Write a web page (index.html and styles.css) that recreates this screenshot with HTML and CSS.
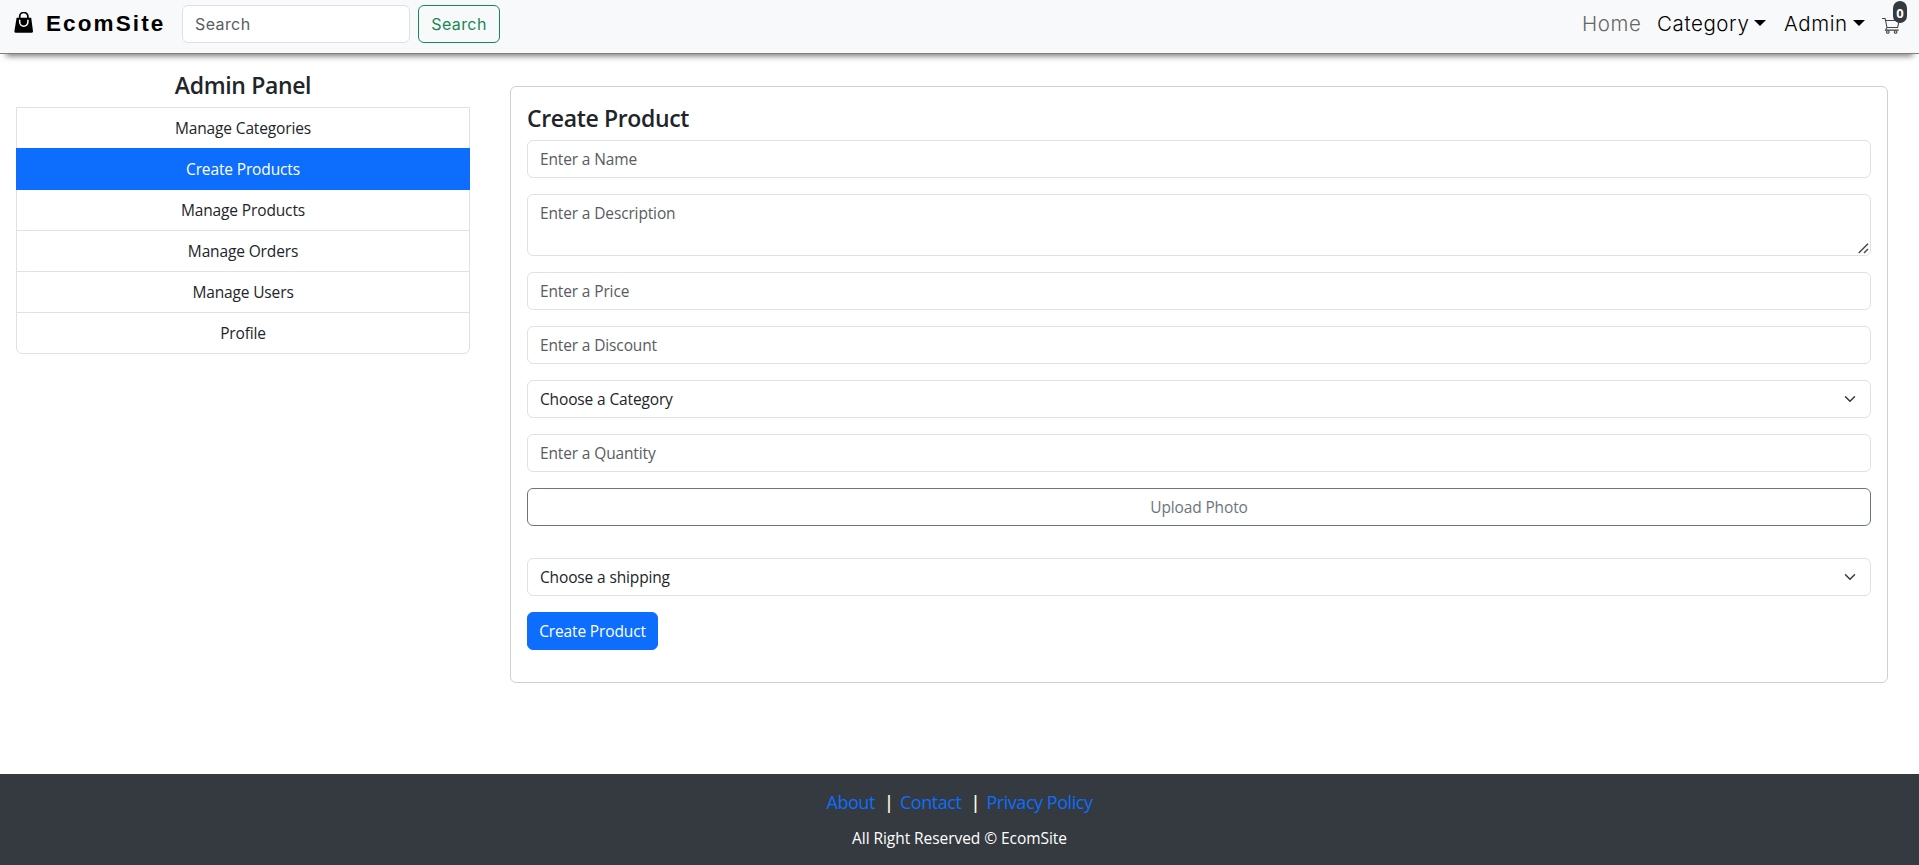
FILE: index.html
```html
<!DOCTYPE html>
<html lang="en">
<head>
<meta charset="utf-8">
<title>Create Product - EcomSite</title>
<link rel="stylesheet" href="styles.css">
</head>
<body>
<header class="navbar">
  <a class="brand">
    <svg class="brand-icon" width="20" height="22" viewBox="0 0 20 22"><path d="M5.7 7V4.6a4.1 4.1 0 0 1 8.2 0V7" fill="none" stroke="#000" stroke-width="1.7"/><path d="M2.6 5.7h14.6L19 19.3a1.3 1.3 0 0 1-1.2 1.5H1.6A1.3 1.3 0 0 1 .4 19.3z" fill="#000"/><path d="M5.7 8.3v1.8a4.1 4.1 0 0 0 8.2 0V8.3" fill="none" stroke="#fff" stroke-width="1.5" stroke-linecap="round"/></svg>
    <span>EcomSite</span>
  </a>
  <form class="search">
    <input class="control search-input" type="search" placeholder="Search">
    <button class="btn btn-search" type="button">Search</button>
  </form>
  <nav class="nav-links">
    <a class="nav-link home">Home</a>
    <a class="nav-link category">Category</a>
    <a class="nav-link admin">Admin</a>
    <a class="cart">
      <svg width="18" height="18" viewBox="0 0 18 18" fill="none" stroke="#444" stroke-width="1.1"><path d="M0 1.5h3.1L5 10.5h10.6L17.2 3.5H3.6M5 10.5l-1.5 2.6h13.2"/><circle cx="5.8" cy="15" r="1.3"/><circle cx="13.6" cy="15" r="1.3"/></svg>
      <span class="badge">0</span>
    </a>
  </nav>
</header>
<main class="page">
  <aside class="sidebar">
    <h4 class="title">Admin Panel</h4>
    <div class="list">
      <a class="item">Manage Categories</a>
      <a class="item active">Create Products</a>
      <a class="item">Manage Products</a>
      <a class="item">Manage Orders</a>
      <a class="item">Manage Users</a>
      <a class="item">Profile</a>
    </div>
  </aside>
  <section class="card">
    <h4 class="title">Create Product</h4>
    <form class="fields">
      <input class="control" placeholder="Enter a Name">
      <div class="area-wrap">
        <textarea class="control area" placeholder="Enter a Description"></textarea>
        <svg class="grip" width="11" height="11" viewBox="0 0 11 11"><path d="M.7 10 10 .7M6 10l4-4" fill="none" stroke="#444" stroke-width="1.4"/></svg>
      </div>
      <input class="control" placeholder="Enter a Price">
      <input class="control" placeholder="Enter a Discount">
      <div class="control select">Choose a Category<svg width="12" height="12" viewBox="0 0 16 16"><path d="m2 5 6 6 6-6" fill="none" stroke="#343a40" stroke-width="2" stroke-linecap="round" stroke-linejoin="round"/></svg></div>
      <input class="control" placeholder="Enter a Quantity">
      <label class="btn btn-upload">Upload Photo</label>
      <div class="control select">Choose a shipping<svg width="12" height="12" viewBox="0 0 16 16"><path d="m2 5 6 6 6-6" fill="none" stroke="#343a40" stroke-width="2" stroke-linecap="round" stroke-linejoin="round"/></svg></div>
      <button class="btn btn-primary" type="button">Create Product</button>
    </form>
  </section>
</main>
<footer class="footer">
  <div class="links"><a class="about">About</a><span class="bar">|</span><a class="contact">Contact</a><span class="bar">|</span><a class="privacy">Privacy Policy</a></div>
  <p class="rights">All Right Reserved © EcomSite</p>
</footer>
</body>
</html>
```
FILE: styles.css
```css
* { box-sizing: border-box; }

body {
  margin: 0;
  height: 865px;
  display: flex;
  flex-direction: column;
  overflow: hidden;
  background: #fff;
  color: #212529;
  font: 15.5px/24px "Open Sans", sans-serif;
  letter-spacing: -0.14px;
}

.navbar {
  height: 54px;
  flex: none;
  display: flex;
  align-items: flex-start;
  padding: 5px 19px 0 14px;
  border-bottom: 1px solid #7d7f81;
  background: #f8f9fa;
  box-shadow: 0 8px 6px -6px #777;
}

.brand {
  display: flex;
  width: 168px;
  color: #000;
  font: bold 22.5px/38px "Liberation Sans", sans-serif;
  letter-spacing: 2.1px;
}

.brand-icon { margin: 7px 12px 0 0; }

.search { display: flex; gap: 8px; }

.control {
  display: block;
  width: 100%;
  height: 38px;
  margin: 0;
  padding: 6px 12px;
  border: 1px solid #dee2e6;
  border-radius: 6px;
  background: #fff;
  color: #212529;
  font: inherit;
  letter-spacing: inherit;
}

.control::placeholder { color: #595c5f; opacity: 1; }

.search-input {
  width: 228px;
  padding-top: 5px;
  font: 16px/24px Inter, sans-serif;
  letter-spacing: 0.4px;
}

.btn {
  height: 38px;
  padding: 6px 12px;
  border: 1px solid;
  border-radius: 6px;
  font: inherit;
  letter-spacing: inherit;
  text-align: center;
}

.btn-search {
  width: 82px;
  padding-top: 5px;
  border-color: #198754;
  background: transparent;
  color: #198754;
  font: 16px/24px Inter, sans-serif;
  letter-spacing: 0.4px;
}

.nav-links {
  display: flex;
  margin-left: auto;
  color: #000;
  font: 300 20.5px/38px Inter, sans-serif;
  letter-spacing: 0.6px;
}

.nav-link { white-space: nowrap; }
.home { width: 75px; color: #666; }
.category { width: 127px; }
.admin { width: 98px; }

.category::after,
.admin::after {
  content: "";
  display: inline-block;
  margin-left: 5px;
  vertical-align: 5px;
  border-top: 6px solid;
  border-right: 6px solid transparent;
  border-left: 6px solid transparent;
}

.cart { position: relative; width: 18px; height: 38px; }
.cart svg { display: block; margin-top: 12px; }

.badge {
  position: absolute;
  left: 11px;
  top: -4px;
  width: 14px;
  height: 22px;
  border-radius: 7px;
  background: #343a40;
  color: #fff;
  font: bold 13px/25px "Open Sans", sans-serif;
  letter-spacing: 0;
  text-align: center;
}

.page {
  flex: 1;
  display: flex;
  align-items: flex-start;
  gap: 40px;
  padding: 0 31px 0 16px;
}

.sidebar { width: 454px; padding-top: 17px; text-align: center; }

.title {
  margin: 0 0 7px;
  font: 600 23px/29px "Open Sans", sans-serif;
  letter-spacing: -0.35px;
}

.list {
  border: 1px solid #dee2e6;
  border-radius: 0 0 6px 6px;
}

.item {
  display: block;
  height: 41px;
  padding: 8px 16px;
  border-bottom: 1px solid #dee2e6;
}

.item:last-child { height: 40px; border-bottom: 0; }

.active {
  height: 42px;
  margin: -1px -1px 0;
  padding-top: 9px;
  border-color: #0d6efd;
  background: #0d6efd;
  color: #fff;
}

.card {
  flex: 1;
  height: 597px;
  margin-top: 32px;
  padding: 17px 16px;
  border: 1px solid #d0d1d2;
  border-radius: 6px;
}

.fields {
  display: flex;
  flex-direction: column;
  align-items: flex-start;
  gap: 16px;
}

.area-wrap { position: relative; width: 100%; }
.area { height: 62px; resize: none; }
.grip { position: absolute; right: 2px; bottom: 2px; }

.select {
  display: flex;
  align-items: center;
  justify-content: space-between;
  padding-right: 14px;
}

.btn-upload {
  width: 100%;
  margin-bottom: 16px;
  border-color: #6c757d;
  color: #6c757d;
}

.btn-primary {
  width: 131px;
  padding: 6px 0;
  border-color: #0d6efd;
  background: #0d6efd;
  color: #fff;
}

.footer {
  height: 91px;
  flex: none;
  padding-top: 14px;
  background: #343a40;
  color: #fff;
  text-align: center;
}

.links {
  display: flex;
  justify-content: center;
  gap: 9px;
  font-size: 18px;
  line-height: 28px;
  letter-spacing: -0.45px;
}

.links a { color: #0d6efd; }
.bar { width: 7px; text-align: center; font-weight: 600; color: #fff8e0; }
.rights { margin: 10px 0 0; line-height: 24px; letter-spacing: -0.06px; }
```
